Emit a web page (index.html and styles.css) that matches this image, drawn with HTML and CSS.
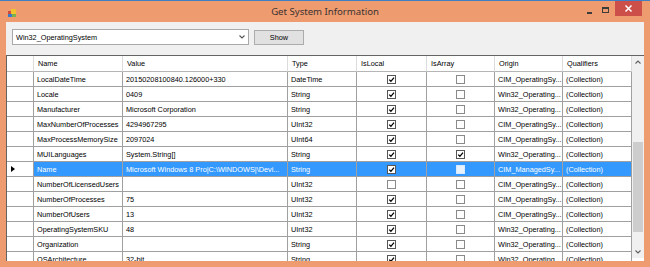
FILE: index.html
```html
<!DOCTYPE html>
<html>
<head>
<meta charset="utf-8">
<link rel="stylesheet" href="styles.css">
</head>
<body>
<div class="window">
  <div class="titlebar">
    <div class="tb-left">
      <svg class="appicon" width="8" height="8" viewBox="0 0 8 8">
        <rect x="0" y="2" width="3" height="3" fill="#d24a3a"/>
        <rect x="3" y="0" width="5" height="5" fill="#f2c230"/>
        <rect x="0" y="5" width="4" height="3" fill="#3a78c8"/>
        <rect x="4" y="5" width="4" height="3" fill="#7cb24a"/>
      </svg>
    </div>
    <div class="title">Get System Information</div>
    <div class="tb-right">
      <div class="btn-min"></div>
      <div class="btn-max"></div>
      <div class="btn-close">
        <svg width="27" height="15" viewBox="0 0 27 15"><path d="M10.5 4.5L16.5 10.5M16.5 4.5L10.5 10.5" stroke="#ffffff" stroke-width="1.5"/></svg>
      </div>
    </div>
  </div>
  <div class="client">
    <div class="toolbar">
      <div class="combo">
        <span class="combo-text">Win32_OperatingSystem</span>
        <svg class="chev" width="6" height="4" viewBox="0 0 6 4"><path d="M0.5 0.5L3 3L5.5 0.5" fill="none" stroke="#555" stroke-width="1.1"/></svg>
      </div>
      <div class="button">Show</div>
    </div>
    <div class="gridwrap">
      <div class="grid">
        <div class="hc"></div><div class="hc">Name</div><div class="hc">Value</div><div class="hc">Type</div><div class="hc">IsLocal</div><div class="hc">IsArray</div><div class="hc">Origin</div><div class="hc">Qualifiers</div>

        <div class="rh"></div><div class="c">LocalDateTime</div><div class="c">20150208100840.126000+330</div><div class="c">DateTime</div><div class="c cc"><span class="cb on"><svg viewBox="0 0 7 7"><path d="M1.2 3.6L2.9 5.3L6 1.6"/></svg></span></div><div class="c cc"><span class="cb"></span></div><div class="c">CIM_OperatingSy...</div><div class="c">(Collection)</div>

        <div class="rh"></div><div class="c">Locale</div><div class="c">0409</div><div class="c">String</div><div class="c cc"><span class="cb on"><svg viewBox="0 0 7 7"><path d="M1.2 3.6L2.9 5.3L6 1.6"/></svg></span></div><div class="c cc"><span class="cb"></span></div><div class="c">Win32_Operating...</div><div class="c">(Collection)</div>

        <div class="rh"></div><div class="c">Manufacturer</div><div class="c">Microsoft Corporation</div><div class="c">String</div><div class="c cc"><span class="cb on"><svg viewBox="0 0 7 7"><path d="M1.2 3.6L2.9 5.3L6 1.6"/></svg></span></div><div class="c cc"><span class="cb"></span></div><div class="c">Win32_Operating...</div><div class="c">(Collection)</div>

        <div class="rh"></div><div class="c">MaxNumberOfProcesses</div><div class="c">4294967295</div><div class="c">UInt32</div><div class="c cc"><span class="cb on"><svg viewBox="0 0 7 7"><path d="M1.2 3.6L2.9 5.3L6 1.6"/></svg></span></div><div class="c cc"><span class="cb"></span></div><div class="c">CIM_OperatingSy...</div><div class="c">(Collection)</div>

        <div class="rh"></div><div class="c">MaxProcessMemorySize</div><div class="c">2097024</div><div class="c">UInt64</div><div class="c cc"><span class="cb on"><svg viewBox="0 0 7 7"><path d="M1.2 3.6L2.9 5.3L6 1.6"/></svg></span></div><div class="c cc"><span class="cb"></span></div><div class="c">CIM_OperatingSy...</div><div class="c">(Collection)</div>

        <div class="rh"></div><div class="c">MUILanguages</div><div class="c">System.String[]</div><div class="c">String</div><div class="c cc"><span class="cb on"><svg viewBox="0 0 7 7"><path d="M1.2 3.6L2.9 5.3L6 1.6"/></svg></span></div><div class="c cc"><span class="cb on"><svg viewBox="0 0 7 7"><path d="M1.2 3.6L2.9 5.3L6 1.6"/></svg></span></div><div class="c">Win32_Operating...</div><div class="c">(Collection)</div>

        <div class="rh"><span class="arrow"></span></div><div class="c sel">Name</div><div class="c sel">Microsoft Windows 8 Pro|C:\WINDOWS|\Devi...</div><div class="c sel">String</div><div class="c cc sel"><span class="cb on"><svg viewBox="0 0 7 7"><path d="M1.2 3.6L2.9 5.3L6 1.6"/></svg></span></div><div class="c cc sel"><span class="cb faded"></span></div><div class="c sel">CIM_ManagedSy...</div><div class="c sel">(Collection)</div>

        <div class="rh"></div><div class="c">NumberOfLicensedUsers</div><div class="c"></div><div class="c">UInt32</div><div class="c cc"><span class="cb"></span></div><div class="c cc"><span class="cb"></span></div><div class="c">CIM_OperatingSy...</div><div class="c">(Collection)</div>

        <div class="rh"></div><div class="c">NumberOfProcesses</div><div class="c">75</div><div class="c">UInt32</div><div class="c cc"><span class="cb on"><svg viewBox="0 0 7 7"><path d="M1.2 3.6L2.9 5.3L6 1.6"/></svg></span></div><div class="c cc"><span class="cb"></span></div><div class="c">CIM_OperatingSy...</div><div class="c">(Collection)</div>

        <div class="rh"></div><div class="c">NumberOfUsers</div><div class="c">13</div><div class="c">UInt32</div><div class="c cc"><span class="cb on"><svg viewBox="0 0 7 7"><path d="M1.2 3.6L2.9 5.3L6 1.6"/></svg></span></div><div class="c cc"><span class="cb"></span></div><div class="c">CIM_OperatingSy...</div><div class="c">(Collection)</div>

        <div class="rh"></div><div class="c">OperatingSystemSKU</div><div class="c">48</div><div class="c">UInt32</div><div class="c cc"><span class="cb on"><svg viewBox="0 0 7 7"><path d="M1.2 3.6L2.9 5.3L6 1.6"/></svg></span></div><div class="c cc"><span class="cb"></span></div><div class="c">Win32_Operating...</div><div class="c">(Collection)</div>

        <div class="rh"></div><div class="c">Organization</div><div class="c"></div><div class="c">String</div><div class="c cc"><span class="cb on"><svg viewBox="0 0 7 7"><path d="M1.2 3.6L2.9 5.3L6 1.6"/></svg></span></div><div class="c cc"><span class="cb"></span></div><div class="c">Win32_Operating...</div><div class="c">(Collection)</div>

        <div class="rh"></div><div class="c">OSArchitecture</div><div class="c">32-bit</div><div class="c">String</div><div class="c cc"><span class="cb on"><svg viewBox="0 0 7 7"><path d="M1.2 3.6L2.9 5.3L6 1.6"/></svg></span></div><div class="c cc"><span class="cb"></span></div><div class="c">Win32_Operating...</div><div class="c">(Collection)</div>
      </div>
      <div class="vscroll">
        <div class="sarrow"><svg width="6" height="4" viewBox="0 0 6 4"><path d="M0.5 3.5L3 1L5.5 3.5" fill="none" stroke="#606060" stroke-width="1.1"/></svg></div>
        <div class="track"><div class="thumb"></div></div>
        <div class="sarrow"><svg width="6" height="4" viewBox="0 0 6 4"><path d="M0.5 0.5L3 3L5.5 0.5" fill="none" stroke="#606060" stroke-width="1.1"/></svg></div>
      </div>
    </div>
  </div>
</div>
</body>
</html>
```

FILE: styles.css
```css
html, body {
  margin: 0;
  padding: 0;
  background: #ef9b70;
}
.window {
  width: 650px;
  height: 267px;
  box-sizing: border-box;
  border-top: 1px solid #3f7fc4;
  background: #ef9b70;
  font-family: "Liberation Sans", Arial, sans-serif;
  font-size: 7.3px;
  color: #000;
  overflow: hidden;
}
.titlebar {
  height: 21px;
  display: grid;
  grid-template-columns: 1fr auto 1fr;
}
.tb-left {
  display: flex;
  align-items: flex-start;
  padding: 8px 0 0 8px;
}
.appicon {
  display: block;
}
.title {
  font-family: "Noto Sans", "Open Sans", sans-serif;
  font-size: 9.6px;
  color: #3a3330;
  line-height: 21px;
}
.tb-right {
  display: flex;
  flex-direction: row;
  justify-content: flex-end;
  align-items: flex-start;
  padding-right: 8px;
}
.btn-min {
  flex: none;
  width: 5px;
  height: 2px;
  background: #3c3c3c;
  margin: 11px 10px 0 0;
}
.btn-max {
  flex: none;
  width: 5px;
  height: 3px;
  border: 1px solid #3c3c3c;
  border-top-width: 2px;
  margin: 6px 6px 0 0;
}
.btn-close {
  flex: none;
  display: block;
  width: 27px;
  height: 15px;
  background-color: #cd4f4a;
}
.btn-close svg { display: block; }
.client {
  margin: 0 6px;
  height: 239px;
  background: #f0f0f0;
  display: flex;
  flex-direction: column;
  overflow: hidden;
}
.toolbar {
  height: 33px;
  box-sizing: border-box;
  padding: 7px 0 0 6px;
  display: flex;
  align-items: flex-start;
  flex: none;
}
.combo {
  width: 237px;
  height: 16px;
  box-sizing: border-box;
  border: 1px solid #a9a9a9;
  background: #fff;
  display: flex;
  align-items: center;
  justify-content: space-between;
  padding: 0 3px 0 3px;
}
.chev { display: block; }
.button {
  width: 50px;
  height: 15px;
  box-sizing: border-box;
  margin: 1px 0 0 5px;
  border: 1px solid #acacac;
  background: #e1e1e1;
  display: flex;
  align-items: center;
  justify-content: center;
}
.gridwrap {
  flex: 1;
  display: flex;
  border-top: 1px solid #646464;
  border-left: 1px solid #646464;
  background: #fff;
  overflow: hidden;
}
.grid {
  display: grid;
  grid-template-columns: 27px 89px 165px 69px 70px 68px 68px 69px;
  grid-template-rows: 16px;
  grid-auto-rows: 15px;
  width: 625px;
  flex: none;
}
.grid > div {
  box-sizing: border-box;
  border-right: 1px solid #a0a0a0;
  border-bottom: 1px solid #a0a0a0;
  white-space: nowrap;
  overflow: hidden;
  display: flex;
  align-items: center;
  background: #fff;
}
.grid > .hc {
  padding-left: 4px;
  border-right-color: #dcdcdc;
  border-bottom-color: #b5b5b5;
}
.grid > .c {
  padding-left: 3px;
}
.grid > .cc {
  justify-content: center;
  padding-left: 0;
}
.grid > .rh {
  padding-left: 4px;
}
.grid > .sel {
  background: #3399ff;
  color: #fff;
}
.arrow {
  width: 0;
  height: 0;
  border-left: 4px solid #000;
  border-top: 3.5px solid transparent;
  border-bottom: 3.5px solid transparent;
}
.cb {
  width: 9px;
  height: 9px;
  box-sizing: border-box;
  border: 1px solid #8a8a8a;
  background: #fff;
  display: flex;
  align-items: center;
  justify-content: center;
}
.cb svg {
  width: 7px;
  height: 7px;
  display: block;
}
.cb svg path {
  fill: none;
  stroke: #000;
  stroke-width: 1.3;
}
.cb.on {
  border-color: #555;
}
.cb.faded {
  background: #e8f2fd;
  border-color: #d6e8fb;
}
.vscroll {
  width: 12px;
  flex: none;
  background: #f0f0f0;
  display: flex;
  flex-direction: column;
  height: 202px;
}
.sarrow {
  height: 12px;
  display: flex;
  align-items: center;
  justify-content: center;
  flex: none;
}
.sarrow svg { display: block; }
.track {
  flex: 1;
  padding-top: 74px;
}
.thumb {
  margin: 0 1px;
  height: 90px;
  background: #cdcdcd;
}
```
